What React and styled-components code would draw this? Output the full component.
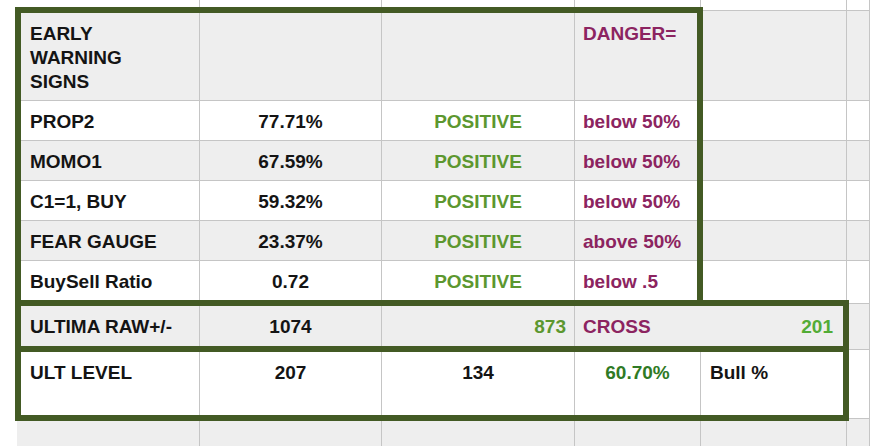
import React from 'react'
import styled, { createGlobalStyle } from 'styled-components'

const GlobalStyle = createGlobalStyle`
  html, body {
    margin: 0;
    padding: 0;
    background: #ffffff;
    overflow: hidden;
  }
  body {
    font-family: "Liberation Sans", Arial, Helvetica, sans-serif;
  }
`

const colors = {
  ink: '#141414',
  purple: '#8c2460',
  olive: '#5c972f',
  lime: '#52ac36',
  forest: '#2f7a25',
  grid: '#c5c5c5',
  shade: '#eeeeee',
  frame: '#435a24',
}

const widths = [183, 182, 193, 126, 146]

const Sheet = styled.div`
  position: relative;
  padding-left: 17px;
  width: 870px;
  height: 446px;
  box-sizing: border-box;
  overflow: hidden;
`

const Row = styled.div`
  display: grid;
  grid-template-columns: ${widths.map(w => w + 'px').join(' ')} 1fr;
  height: ${p => p.$h}px;
  background: ${p => (p.$shade ? colors.shade : '#ffffff')};
`

const Cell = styled.div`
  box-sizing: border-box;
  grid-column: span ${p => p.$span || 1};
  display: flex;
  justify-content: ${p => p.$justify || 'flex-start'};
  border-right: 1px solid ${colors.grid};
  border-bottom: 1px solid ${colors.grid};
  padding: ${p => p.$top ?? 9}px ${p => p.$right ?? 8}px 0 ${p => p.$left ?? 8}px;
  font-size: 19px;
  font-weight: 700;
  line-height: 23.75px;
  color: ${p => colors[p.$tone] || colors.ink};
  white-space: nowrap;
  overflow: hidden;
`

const Tone = styled.span`
  color: ${p => colors[p.$tone] || colors.ink};
`

const Frame = styled.div`
  position: absolute;
  box-sizing: border-box;
  border: 6px solid ${colors.frame};
  left: ${p => p.$x}px;
  top: ${p => p.$y}px;
  width: ${p => p.$w}px;
  height: ${p => p.$h}px;
  pointer-events: none;
`

const Heading = styled.span`
  white-space: normal;
  display: block;
`

const metrics = [
  { name: 'PROP2', val: '77.71%', state: 'POSITIVE', rule: 'below 50%' },
  { name: 'MOMO1', val: '67.59%', state: 'POSITIVE', rule: 'below 50%' },
  { name: 'C1=1, BUY', val: '59.32%', state: 'POSITIVE', rule: 'below 50%' },
  { name: 'FEAR GAUGE', val: '23.37%', state: 'POSITIVE', rule: 'above 50%' },
  { name: 'BuySell Ratio', val: '0.72', state: 'POSITIVE', rule: 'below .5' },
]

const Blank = ({ n }) => Array.from({ length: n }, (_, i) => <Cell key={'b' + i} />)

export default function App() {
  return (
    <>
      <GlobalStyle />
      <Sheet>
        <Row $h={11}>
          <Blank n={6} />
        </Row>

        <Row $h={90} $shade>
          <Cell $left={13} $top={11}>
            <Heading>EARLY<br />WARNING<br />SIGNS</Heading>
          </Cell>
          <Cell />
          <Cell />
          <Cell $tone="purple" $top={11}>DANGER=</Cell>
          <Cell />
          <Cell />
        </Row>

        {metrics.map((m, i) => (
          <Row key={m.name} $h={i === 4 ? 43 : 40} $shade={i % 2 === 1}>
            <Cell $left={13}>{m.name}</Cell>
            <Cell $justify="center">{m.val}</Cell>
            <Cell $justify="center" $tone="olive">{m.state}</Cell>
            <Cell $tone="purple">{m.rule}</Cell>
            <Cell />
            <Cell />
          </Row>
        ))}

        <Row $h={46} $shade>
          <Cell $left={13} $top={11}>ULTIMA RAW+/-</Cell>
          <Cell $justify="center" $top={11}>1074</Cell>
          <Cell $justify="flex-end" $tone="olive" $top={11}>873</Cell>
          <Cell $span={2} $justify="space-between" $right={13} $top={11}>
            <Tone $tone="purple">CROSS</Tone>
            <Tone $tone="lime">201</Tone>
          </Cell>
          <Cell />
        </Row>

        <Row $h={69}>
          <Cell $left={13} $top={11}>ULT LEVEL</Cell>
          <Cell $justify="center" $top={11}>207</Cell>
          <Cell $justify="center" $top={11}>134</Cell>
          <Cell $justify="center" $tone="forest" $top={11}>60.70%</Cell>
          <Cell $left={9} $top={11}>Bull %</Cell>
          <Cell />
        </Row>

        <Row $h={40} $shade>
          <Blank n={6} />
        </Row>

        <Frame $x={15} $y={7} $w={688} $h={299} />
        <Frame $x={15} $y={300} $w={834} $h={52} />
        <Frame $x={15} $y={346} $w={834} $h={75} />
      </Sheet>
    </>
  )
}
